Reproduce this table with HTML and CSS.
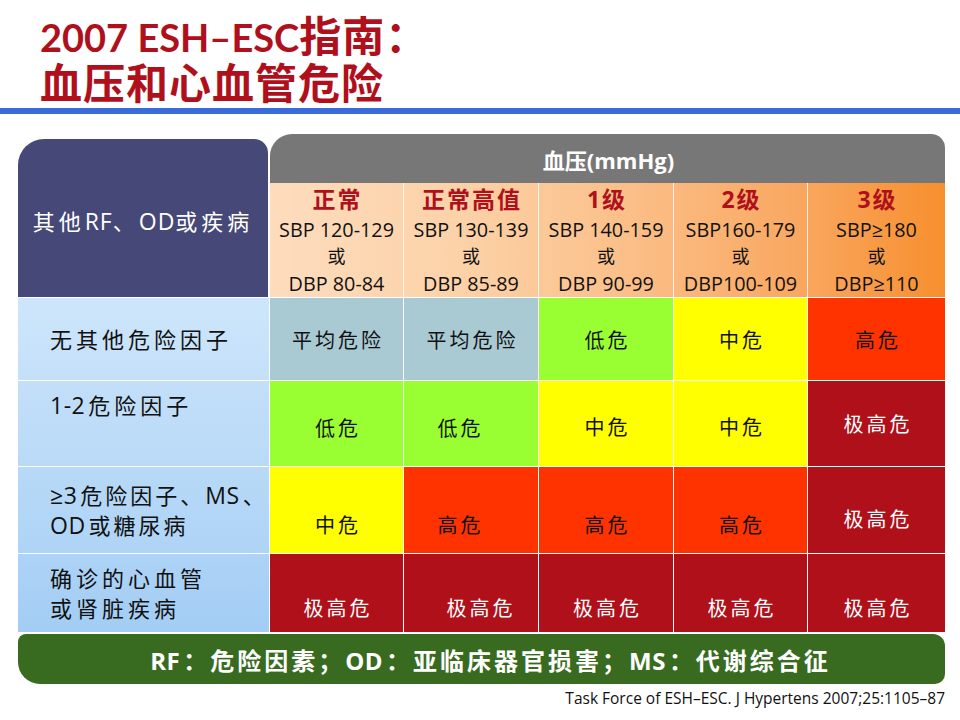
FILE: index.html
```html
<!DOCTYPE html>
<html lang="zh-CN">
<head>
<meta charset="utf-8">
<title>2007 ESH–ESC指南：血压和心血管危险</title>
<link rel="stylesheet" href="styles.css">
</head>
<body>
<div class="slide">
  <h1 class="title"><span class="lat">2007 ESH–ESC</span>指南：<br>血压和心血管危险</h1>
  <div class="rule"></div>

  <div class="chart">
    <div class="corner"><span class="txt">其他<span class="lt">RF</span>、<span class="lt">OD</span>或疾病</span></div>
    <div class="bp">
      <div class="bp-title">血压(mmHg)</div>
      <div class="grades">
        <div class="grade"><div class="g-name">正常</div><div class="g-line">SBP 120-129</div><div class="g-or">或</div><div class="g-line">DBP 80-84</div></div>
        <div class="grade"><div class="g-name">正常高值</div><div class="g-line">SBP 130-139</div><div class="g-or">或</div><div class="g-line">DBP 85-89</div></div>
        <div class="grade"><div class="g-name">1级</div><div class="g-line">SBP 140-159</div><div class="g-or">或</div><div class="g-line">DBP 90-99</div></div>
        <div class="grade"><div class="g-name">2级</div><div class="g-line">SBP160-179</div><div class="g-or">或</div><div class="g-line">DBP100-109</div></div>
        <div class="grade"><div class="g-name">3级</div><div class="g-line">SBP≥180</div><div class="g-or">或</div><div class="g-line">DBP≥110</div></div>
      </div>
    </div>

    <div class="lbl l1"><span class="txt">无其他危险因子</span></div>
    <div class="cell avg">平均危险</div>
    <div class="cell avg">平均危险</div>
    <div class="cell low">低危</div>
    <div class="cell mid">中危</div>
    <div class="cell high">高危</div>

    <div class="lbl l2 top"><span class="txt"><span class="lt">1-2</span>危险因子</span></div>
    <div class="cell low p8">低危</div>
    <div class="cell low p8 sl">低危</div>
    <div class="cell mid p6">中危</div>
    <div class="cell mid p6">中危</div>
    <div class="cell vhigh">极高危</div>

    <div class="lbl l3"><span class="txt"><span class="lt">≥3</span>危险因子、<span class="lt">MS</span>、<br><span class="lt">OD</span>或糖尿病</span></div>
    <div class="cell mid p28">中危</div>
    <div class="cell high p28 sl">高危</div>
    <div class="cell high p28">高危</div>
    <div class="cell high p28">高危</div>
    <div class="cell vhigh p16">极高危</div>

    <div class="lbl l4"><span class="txt">确诊的心血管<br>或肾脏疾病</span></div>
    <div class="cell vhigh p28">极高危</div>
    <div class="cell vhigh p28 sr">极高危</div>
    <div class="cell vhigh p28">极高危</div>
    <div class="cell vhigh p28">极高危</div>
    <div class="cell vhigh p28">极高危</div>
  </div>

  <div class="legend"><span class="txt"><span class="lt">RF</span>：危险因素；<span class="lt">OD</span>：亚临床器官损害；<span class="lt">MS</span>：代谢综合征</span></div>
  <div class="cite">Task Force of ESH–ESC. J Hypertens 2007;25:1105–87</div>
</div>
</body>
</html>
```
FILE: styles.css
```css
html, body {
  margin: 0;
  padding: 0;
  background: #ffffff;
}

body {
  font-family: "Open Sans", "Noto Sans CJK SC", sans-serif;
  color: #111111;
}

.slide {
  width: 960px;
  height: 720px;
  overflow: hidden;
}

.title {
  margin: 13px 0 0 40px;
  font-family: Lato, "Noto Sans CJK SC", sans-serif;
  font-size: 42px;
  line-height: 46px;
  font-weight: 700;
  color: #b0101c;
  letter-spacing: 1px;
}

.title .lat {
  font-size: 38px;
  letter-spacing: 0;
}

.rule {
  height: 6px;
  margin-top: 2px;
  background: #3a6bdc;
}

.chart {
  display: grid;
  grid-template-columns: 251px 133px 134px 134px 133px 137px;
  grid-template-rows: 163px 82px 85px 86px 78px;
  gap: 1px;
  width: 927px;
  margin: 20px 0 0 18px;
}

.txt {
  display: block;
}

.lt {
  letter-spacing: 0.5px;
}

.corner {
  margin-top: 5px;
  width: 250px;
  background: #464878;
  color: #ffffff;
  border-radius: 26px 14px 0 0;
  display: flex;
  align-items: center;
  justify-content: center;
  font-size: 22px;
  letter-spacing: 4px;
  padding-top: 4px;
  box-sizing: border-box;
  white-space: nowrap;
}

.corner .lt {
  font-size: 23px;
  letter-spacing: 1px;
}

.bp {
  grid-column: 2 / 7;
  display: flex;
  flex-direction: column;
}

.bp-title {
  height: 49px;
  flex: none;
  background: #777777;
  border-radius: 22px 14px 0 0;
  color: #ffffff;
  font-weight: 700;
  font-size: 22px;
  display: flex;
  align-items: center;
  justify-content: center;
  padding-left: 2px;
}

.grades {
  flex: 1;
  display: grid;
  grid-template-columns: 133px 135px 135px 134px 138px;
  background: linear-gradient(to right, #fddcbd 0%, #fcd2a8 28%, #fbc08a 52%, #f9a861 78%, #f78f2e 100%);
}

.grade {
  box-sizing: border-box;
  text-align: center;
  white-space: nowrap;
}

.grade + .grade {
  border-left: 1px solid rgba(255, 255, 255, 0.85);
}

.g-name {
  font-size: 23px;
  line-height: 33px;
  font-weight: 700;
  color: #b0101c;
  letter-spacing: 2px;
  padding-left: 2px;
}

.g-line {
  font-size: 19.8px;
  line-height: 27px;
}

.g-or {
  font-size: 18px;
  line-height: 27px;
}

.lbl {
  display: flex;
  align-items: center;
  padding-left: 32px;
  font-size: 22px;
  line-height: 30px;
  letter-spacing: 4px;
  white-space: nowrap;
  color: #111111;
}

.lbl .lt {
  font-size: 23px;
  letter-spacing: 0.5px;
  margin-right: 3px;
}

.lbl.top {
  align-items: flex-start;
  padding-top: 9px;
  box-sizing: border-box;
}

.l1 { background: linear-gradient(#cde6fb, #c4e0f9); }
.l2 { background: linear-gradient(#c3dff9, #b9daf7); }
.l3 { background: linear-gradient(#b8d9f7, #aed4f6); }
.l4 { background: linear-gradient(#add3f6, #a3cdf4); }

.l3 .txt {
  letter-spacing: 3px;
}

.cell {
  display: flex;
  align-items: center;
  justify-content: center;
  box-sizing: border-box;
  font-size: 20px;
  letter-spacing: 3px;
  padding-left: 3px;
  color: #111111;
}

.avg { background: #a9cad3; }
.low { background: #99ff33; }
.mid { background: #ffff00; }
.high { background: #ff3300; }
.vhigh { background: #b0101a; color: #ffffff; }

.p6 { padding-top: 6px; }
.p8 { padding-top: 8px; }
.p16 { padding-top: 16px; }
.p28 { padding-top: 28px; }
.sl { padding-right: 24px; }
.sr { padding-left: 20px; }

.legend {
  width: 927px;
  height: 50px;
  margin: 2px 0 0 18px;
  background: #386b1f;
  border-radius: 8px 12px 10px 22px;
  color: #ffffff;
  font-weight: 700;
  font-size: 24px;
  letter-spacing: 3px;
  display: flex;
  align-items: center;
  justify-content: center;
  padding-left: 18px;
  box-sizing: border-box;
  white-space: nowrap;
}

.legend .lt {
  letter-spacing: 0.5px;
  margin-right: 3px;
}

.cite {
  width: 945px;
  margin-top: 3px;
  text-align: right;
  font-size: 15.5px;
  line-height: 22px;
  color: #111111;
}
```
